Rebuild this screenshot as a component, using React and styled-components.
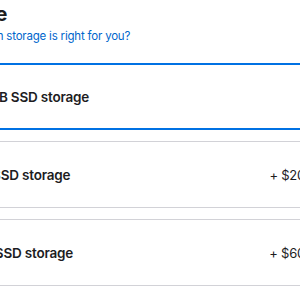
import styled, { createGlobalStyle } from 'styled-components';

const GlobalStyle = createGlobalStyle`
  html, body {
    margin: 0;
    padding: 0;
    background: #ffffff;
    overflow: hidden;
  }
  body {
    font-family: Inter, "Liberation Sans", sans-serif;
    color: #1d1d1f;
    -webkit-font-smoothing: antialiased;
  }
`;

const Section = styled.section`
  width: 400px;
  margin-left: -51px;
  padding-top: 3px;
  display: flex;
  flex-direction: column;
`;

const Header = styled.header`
  display: flex;
  flex-direction: column;
  align-items: flex-start;
  gap: 3px;
  padding: 0 21px;
`;

const Title = styled.h2`
  margin: 0 0 0 -38px;
  font-size: 20px;
  font-weight: 700;
  line-height: 22px;
  letter-spacing: -0.2px;
`;

const HelpLink = styled.a`
  font-size: 11.5px;
  line-height: 16px;
  letter-spacing: -0.2px;
  color: #0066cc;
  text-decoration: none;
  cursor: pointer;
`;

const OptionList = styled.div`
  display: flex;
  flex-direction: column;
  gap: 11px;
  margin-top: 19px;
`;

const Option = styled.label`
  box-sizing: border-box;
  height: 67px;
  display: flex;
  align-items: center;
  justify-content: space-between;
  padding: 0 16px;
  border-radius: 12px;
  border: ${(p) => (p.selected ? '2px solid #0071e3' : '1px solid #d2d2d7')};
  cursor: pointer;
`;

const Label = styled.span`
  font-size: 13.5px;
  font-weight: 600;
  letter-spacing: -0.2px;
`;

const Price = styled.span`
  font-size: 13px;
  font-weight: 400;
  letter-spacing: -0.2px;
`;

const options = [
  { id: '512', name: '512GB SSD storage', price: '' },
  { id: '1tb', name: '1TB SSD storage', price: '+ $200.00' },
  { id: '2tb', name: '2TB SSD storage', price: '+ $600.00' },
];

export default function App() {
  return (
    <>
      <GlobalStyle />
      <Section>
        <Header>
          <Title>Storage</Title>
          <HelpLink>Which storage is right for you?</HelpLink>
        </Header>
        <OptionList>
          {options.map((o, i) => (
            <Option key={o.id} selected={i === 0}>
              <Label>{o.name}</Label>
              {o.price && <Price>{o.price}</Price>}
            </Option>
          ))}
        </OptionList>
      </Section>
    </>
  );
}
